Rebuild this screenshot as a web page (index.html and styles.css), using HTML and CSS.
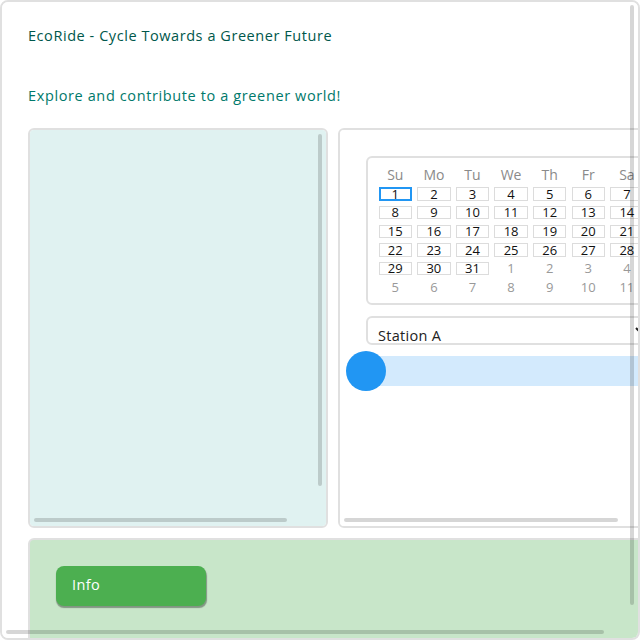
FILE: index.html
```html
<!DOCTYPE html>
<html lang="en">
<head>
<meta charset="utf-8">
<title>EcoRide</title>
<link rel="stylesheet" href="styles.css">
</head>
<body>
<div class="app">
  <h1 class="title">EcoRide - Cycle Towards a Greener Future</h1>
  <p class="subtitle">Explore and contribute to a greener world!</p>
  <div class="layout">
    <section class="panel map-panel">
      <div class="map"></div>
      <span class="sb sb-v" style="height:352px"></span>
      <span class="sb sb-h" style="width:253px"></span>
    </section>
    <section class="panel controls">
      <div class="calendar">
        <div class="dow">Su</div><div class="dow">Mo</div><div class="dow">Tu</div><div class="dow">We</div><div class="dow">Th</div><div class="dow">Fr</div><div class="dow">Sa</div>
        <div class="cell"><button class="day selected">1</button></div>
        <div class="cell"><button class="day">2</button></div>
        <div class="cell"><button class="day">3</button></div>
        <div class="cell"><button class="day">4</button></div>
        <div class="cell"><button class="day">5</button></div>
        <div class="cell"><button class="day">6</button></div>
        <div class="cell"><button class="day">7</button></div>
        <div class="cell"><button class="day">8</button></div>
        <div class="cell"><button class="day">9</button></div>
        <div class="cell"><button class="day">10</button></div>
        <div class="cell"><button class="day">11</button></div>
        <div class="cell"><button class="day">12</button></div>
        <div class="cell"><button class="day">13</button></div>
        <div class="cell"><button class="day">14</button></div>
        <div class="cell"><button class="day">15</button></div>
        <div class="cell"><button class="day">16</button></div>
        <div class="cell"><button class="day">17</button></div>
        <div class="cell"><button class="day">18</button></div>
        <div class="cell"><button class="day">19</button></div>
        <div class="cell"><button class="day">20</button></div>
        <div class="cell"><button class="day">21</button></div>
        <div class="cell"><button class="day">22</button></div>
        <div class="cell"><button class="day">23</button></div>
        <div class="cell"><button class="day">24</button></div>
        <div class="cell"><button class="day">25</button></div>
        <div class="cell"><button class="day">26</button></div>
        <div class="cell"><button class="day">27</button></div>
        <div class="cell"><button class="day">28</button></div>
        <div class="cell"><button class="day">29</button></div>
        <div class="cell"><button class="day">30</button></div>
        <div class="cell"><button class="day">31</button></div>
        <div class="cell muted">1</div>
        <div class="cell muted">2</div>
        <div class="cell muted">3</div>
        <div class="cell muted">4</div>
        <div class="cell muted">5</div>
        <div class="cell muted">6</div>
        <div class="cell muted">7</div>
        <div class="cell muted">8</div>
        <div class="cell muted">9</div>
        <div class="cell muted">10</div>
        <div class="cell muted">11</div>
      </div>
      <select class="station">
        <option>Station A</option>
        <option>Station B</option>
        <option>Station C</option>
      </select>
      <div class="slider">
        <span class="thumb"></span>
      </div>
      <span class="sb sb-h" style="width:274px"></span>
    </section>
    <section class="panel actions">
      <button class="info-btn">Info</button>
    </section>
  </div>
  <span class="sb sb-v sb-outer" style="height:600px"></span>
  <span class="sb sb-h sb-outer" style="width:598px"></span>
</div>
</body>
</html>
```
FILE: styles.css
```css
* { box-sizing: border-box; }
html, body { margin: 0; padding: 0; background: #fff; }
body { font-family: "Open Sans", "DejaVu Sans", sans-serif; }

.app {
  position: relative;
  height: 640px;
  border: 2px solid #e0e0e0;
  border-radius: 8px;
  padding: 26px;
  overflow: auto;
  background: #fff;
}

.title {
  margin: 0 0 43px;
  font-size: 14.5px;
  font-weight: 400;
  line-height: 16px;
  letter-spacing: 0.56px;
  color: #00574b;
}

.subtitle {
  margin: 0 0 23px;
  font-size: 14.5px;
  line-height: 18px;
  letter-spacing: 0.62px;
  color: #00796b;
}

.layout {
  display: grid;
  grid-template-columns: 300px 320px;
  gap: 10px;
}

.panel {
  position: relative;
  border: 2px solid #e0e0e0;
  border-radius: 6px;
  padding: 26px;
  overflow: auto;
}

.map-panel {
  height: 400px;
  background: #e0f2f1;
}

.map {
  width: 291px;
  height: 388px;
}

.controls {
  height: 400px;
  background: #fff;
  display: grid;
  grid-template-columns: max-content;
  align-content: start;
}

.calendar {
  border: 2px solid #e0e0e0;
  border-radius: 6px;
  padding: 8px 8px 6px;
  display: grid;
  grid-template-columns: repeat(7, 38.6px);
  grid-auto-rows: 18.7px;
  font-size: 13px;
}

.dow {
  text-align: center;
  color: #8a8a8a;
  font-size: 14px;
  line-height: 18px;
}

.cell {
  display: flex;
  align-items: center;
  justify-content: center;
  line-height: 1;
}

.day {
  width: 33.3px;
  height: 13.3px;
  padding: 0;
  border: 1px solid #dcdcdc;
  background: #fff;
  font: inherit;
  font-size: 13px;
  line-height: 11px;
  color: #111;
}

.day.selected {
  border: 2px solid #2196f3;
}

.muted {
  color: #999;
}

.station {
  justify-self: start;
  width: 284px;
  margin-top: 11px;
  height: 29px;
  border: 2px solid #e0e0e0;
  border-radius: 6px;
  background: #fff;
  padding: 7px 6px 0;
  font-family: inherit;
  font-size: 14.5px;
  letter-spacing: 0.3px;
  color: #222;
}

.slider {
  position: relative;
  margin-top: 11px;
  height: 30px;
  background: #d3eafd;
}

.thumb {
  position: absolute;
  left: -20px;
  top: -5px;
  width: 40px;
  height: 40px;
  border-radius: 50%;
  background: #2196f3;
}

.actions {
  grid-column: 1 / span 2;
  height: 120px;
  background: #c8e6c9;
}

.info-btn {
  width: 150px;
  height: 40px;
  border: none;
  border-radius: 8px;
  background: #4caf50;
  color: #fff;
  font-family: inherit;
  font-size: 14.5px;
  letter-spacing: 0.4px;
  text-align: left;
  padding: 0 16px 4px;
  box-shadow: 0.5px 2px 1px rgba(0, 0, 0, 0.35);
}

/* overlay scrollbar thumbs */
.sb {
  position: absolute;
  border-radius: 2px;
  background: rgba(0, 0, 0, 0.16);
}

.sb-v {
  top: 4px;
  right: 4px;
  width: 4px;
}

.sb-h {
  left: 4px;
  bottom: 4px;
  height: 4px;
}

.sb-v.sb-outer {
  top: 3px;
}
```
